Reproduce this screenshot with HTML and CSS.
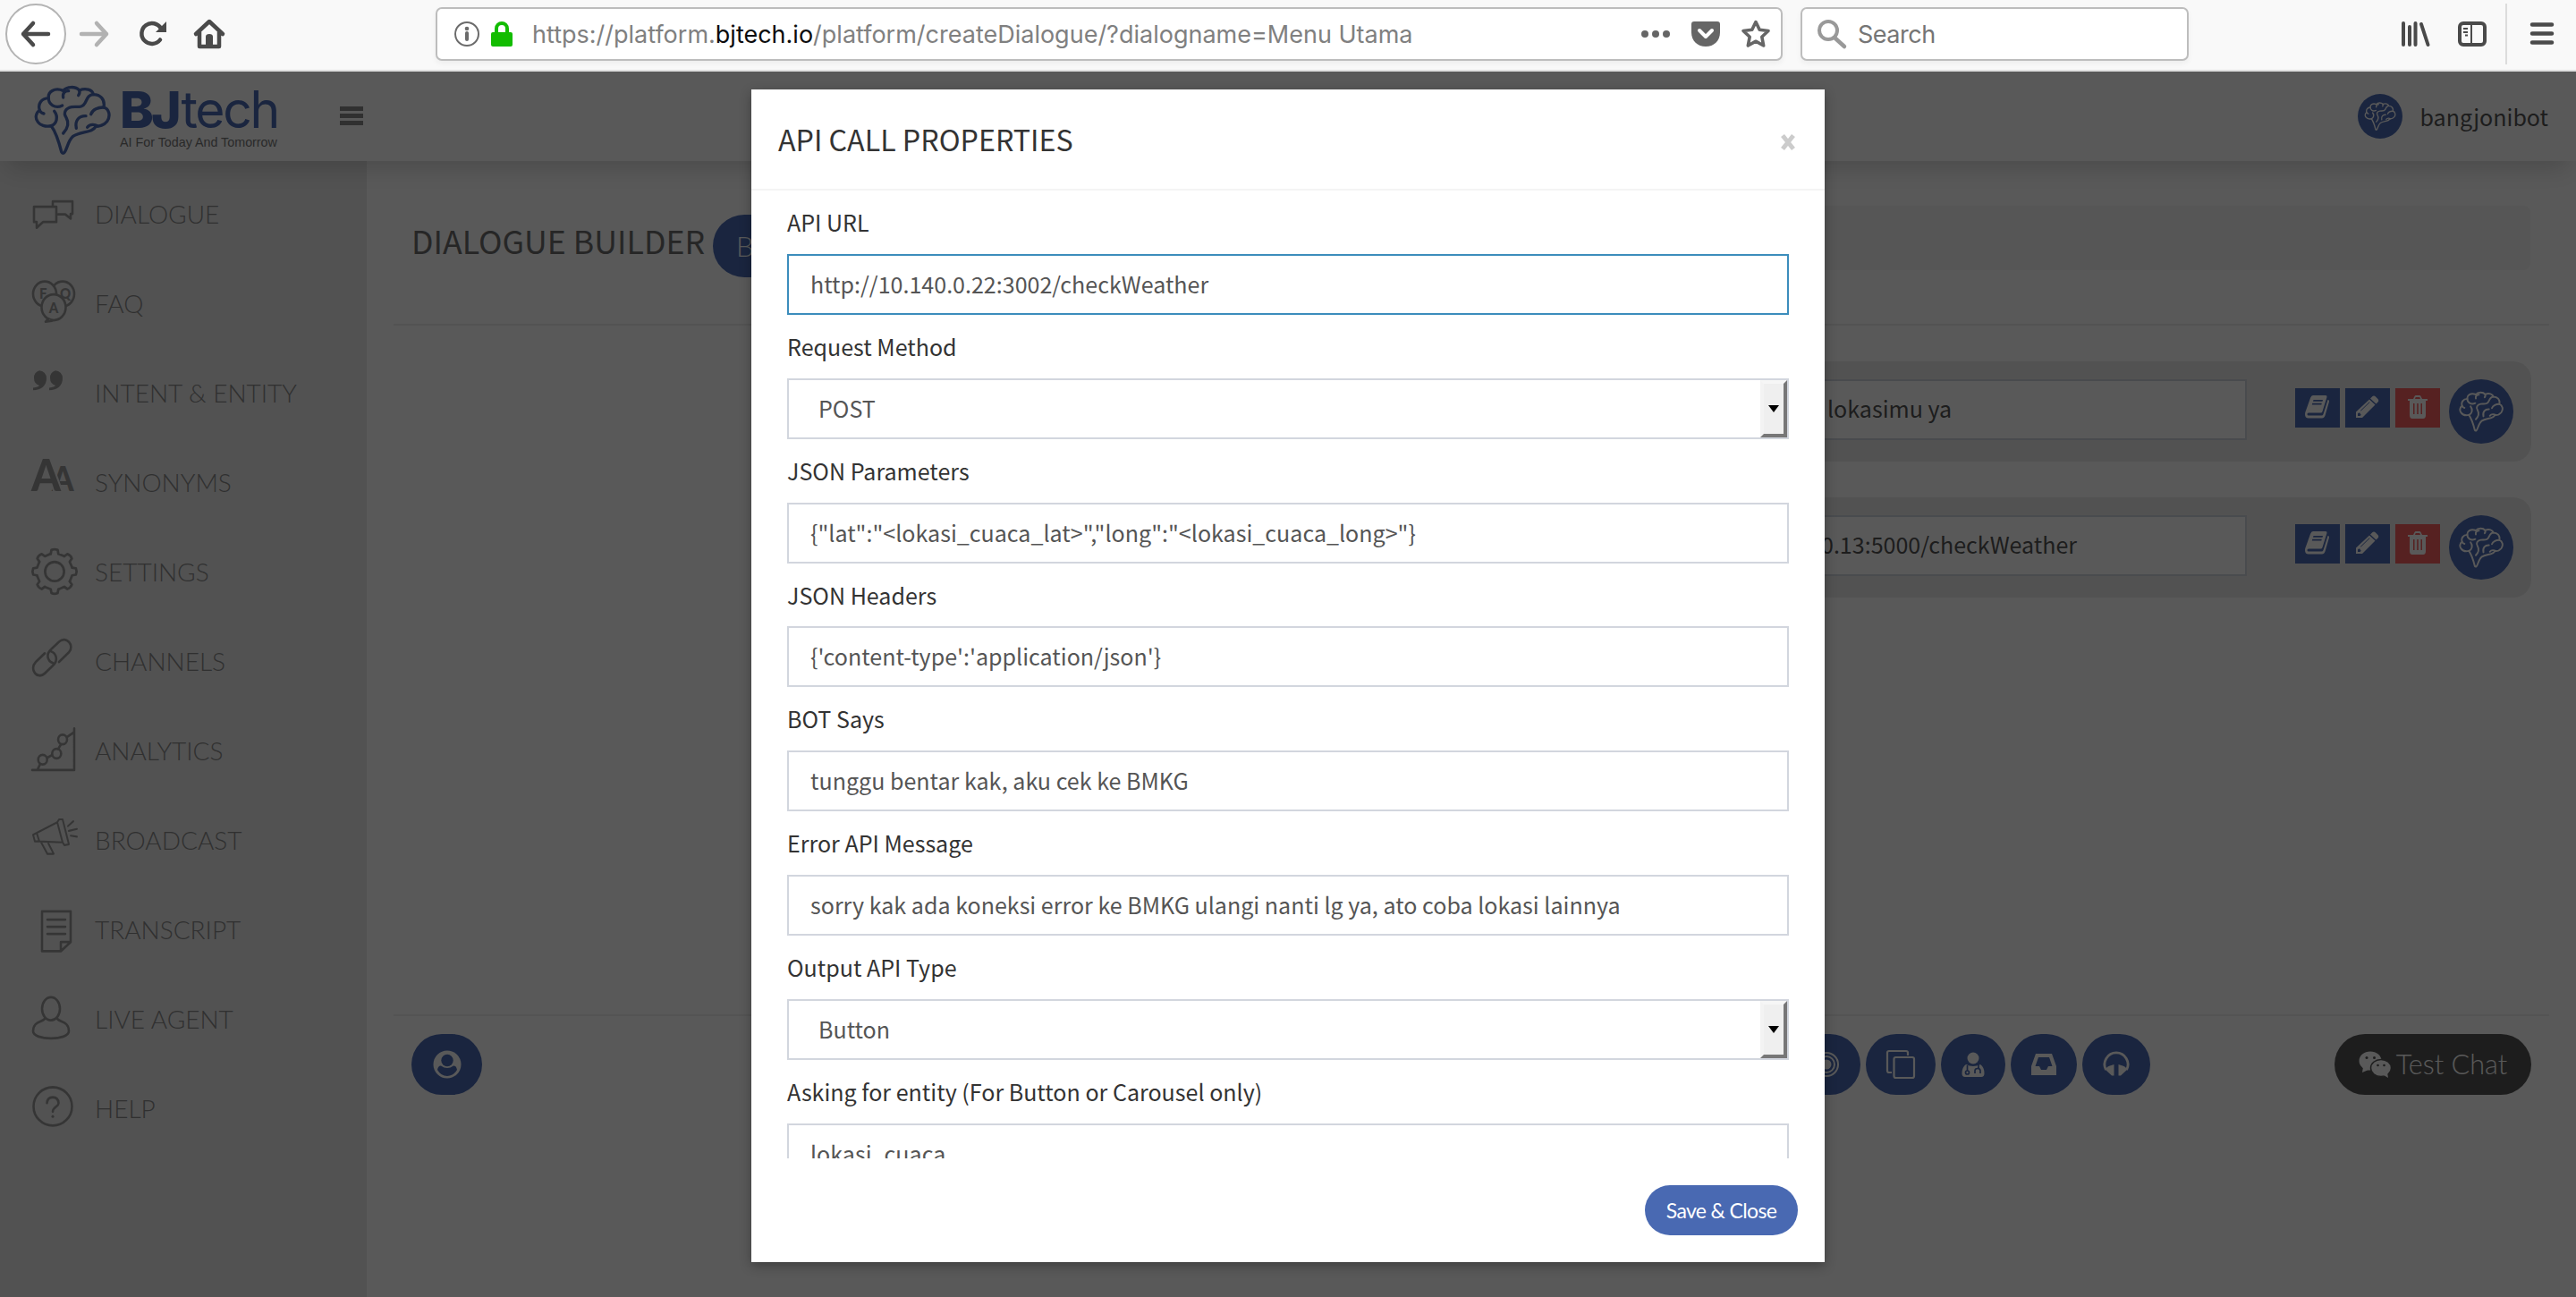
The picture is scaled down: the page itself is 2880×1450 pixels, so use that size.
FILE: index.html
```html
<!DOCTYPE html>
<html lang="id">
<head>
<meta charset="utf-8">
<title>Dialogue Builder</title>
<link rel="stylesheet" href="styles.css">
</head>
<body>
<svg class="defs" width="0" height="0" aria-hidden="true">
  <symbol id="brain" viewBox="24 18 258 234">
    <g fill="none" stroke="currentColor" stroke-width="10" stroke-linecap="round" stroke-linejoin="round">
      <path d="M82 155C62 160 44 152 37 142C26 128 31 110 43 103C36 82 48 63 73 62C70 42 92 25 122 37C134 22 164 22 176 36C198 27 220 34 223 50C246 50 263 66 258 93C276 98 282 122 269 140C259 153 242 157 232 156C220 180 182 172 155 190C137 204 134 240 124 246Q119 248 116 242C108 210 100 180 82 155"/>
      <path d="M43 103Q47 112 57 114M92 106C106 124 101 148 82 155M73 62C72 82 94 99 119 87M122 60C119 46 128 37 140 38M176 36Q179 44 173 53M223 50C205 50 202 66 195 79C186 97 166 89 150 92C130 96 121 111 132 127C143 146 136 165 122 180M166 163C160 136 176 121 198 122M215 116C220 101 240 92 258 93M203 160C212 148 228 150 238 156"/>
    </g>
  </symbol>
  <symbol id="book" viewBox="0 0 28 26">
    <path fill="currentColor" fill-rule="evenodd" d="M9 0H23Q25 0 24.500 2L19.500 18Q19 19.500 17.500 19.500H4Q2.500 19.500 2.500 21T4 22.500H18.500Q20 22.500 20.500 21L25.500 5Q27.500 5 27 7L22.500 22.500Q21.500 25.500 19 25.500H4Q0 25.500 0 21Q0 19 1 17L6 3Q7 0 9 0ZM9.500 5L9 6.800H19.500L20 5ZM8.300 8.800L7.800 10.600H18.300L18.800 8.800Z"/>
  </symbol>
  <symbol id="pencil" viewBox="0 0 26 26">
    <path fill="currentColor" fill-rule="evenodd" d="M18 1.500Q20 -0.500 22 1.500L24.500 4Q26 6 24.500 7.500L22.500 9.500L16 3.500ZM15 4.500L21.500 10.500L7 25H0V18.500ZM3 19.500L2 20.500V23H4.500L6 21.500L4.800 21.200V19.800ZM5.500 17.500L15.500 7.800L15 7.200L5 17Z"/>
  </symbol>
  <symbol id="trash" viewBox="0 0 22 26">
    <path fill="currentColor" fill-rule="evenodd" d="M0 4H6L7.500 1Q8 0 9 0H13Q14 0 14.500 1L16 4H22V6H20V22Q20 26 17 26H5Q2 26 2 22V6H0ZM8 4H14L13.300 2H8.700ZM6 9V21H7.500V9ZM10.200 9V21H11.800V9ZM14.500 9V21H16V9Z"/>
  </symbol>
</svg>

<div class="toolbar">
  <div class="nav">
    <span class="back"><svg width="34" height="30" viewBox="0 0 34 30"><path d="M31 15H3M14 3L3 15L14 27" class="ln"/></svg></span>
    <svg class="fwd" width="34" height="30" viewBox="0 0 34 30"><path d="M2 15H30M19 3L30 15L19 27" class="ln"/></svg>
    <svg class="reload" width="32" height="30" viewBox="0 0 32 30"><path d="M23 21.500A11.500 11.500 0 1 1 24 9" class="ln"/><path d="M30 1V13H18Z" fill="currentColor"/></svg>
    <svg class="home" width="34" height="34" viewBox="0 0 34 34"><path d="M2 17L17 3L32 17M6 15V31H28V15" class="ln"/><path d="M13 29V20Q13 17 17 17T21 20V29Z" fill="currentColor"/></svg>
  </div>
  <div class="urlbar">
    <svg width="30" height="30" viewBox="0 0 30 30"><circle cx="15" cy="15" r="13" fill="none" stroke="#6b6b6b" stroke-width="2"/><circle cx="15" cy="9" r="2.300" fill="#6b6b6b"/><path d="M15 14V21" stroke="#6b6b6b" stroke-width="4" stroke-linecap="round"/></svg>
    <svg class="lock" width="24" height="28" viewBox="0 0 24 28"><path d="M6 13V8A6 6 0 0 1 18 8V13" fill="none" stroke="#12bc00" stroke-width="4"/><rect y="12" width="24" height="16" rx="2" fill="#12bc00"/></svg>
    <span class="url">https://platform.<b>bjtech.io</b>/platform/createDialogue/?dialogname=Menu Utama</span>
    <span class="urlicons">
      <svg width="32" height="30" viewBox="0 0 32 30"><g fill="currentColor"><circle cx="4" cy="15" r="4"/><circle cx="16" cy="15" r="4"/><circle cx="28" cy="15" r="4"/></g></svg>
      <svg width="32" height="28" viewBox="0 0 32 28"><path d="M3 0H29Q32 0 32 3V12C32 22 25 28 16 28S0 22 0 12V3Q0 0 3 0Z" fill="currentColor"/><path d="M9 10L16 17L23 10" fill="none" stroke="#fff" stroke-width="4" stroke-linecap="round" stroke-linejoin="round"/></svg>
      <svg width="32" height="32" viewBox="0 0 32 32"><path d="M16 2.500L20.200 11.300L30 12.500L22.800 19.200L24.700 29L16 24.200L7.300 29L9.200 19.200L2 12.500L11.800 11.300Z" fill="none" stroke="currentColor" stroke-width="3.600" stroke-linejoin="round"/></svg>
    </span>
  </div>
  <div class="search">
    <svg width="34" height="34" viewBox="0 0 34 34"><circle cx="13" cy="13" r="10" fill="none" stroke="#999" stroke-width="4"/><path d="M20 21L31 31" stroke="#999" stroke-width="4.500" stroke-linecap="round"/></svg>
    <span>Search</span>
  </div>
  <div class="tools">
    <svg width="32" height="28" viewBox="0 0 32 28"><path d="M2 2V26M9 6V26M15.500 2V26M22 3L29.500 26" fill="none" stroke="currentColor" stroke-width="4" stroke-linecap="round"/></svg>
    <svg width="32" height="28" viewBox="0 0 32 28"><rect x="2" y="2" width="28" height="24" rx="4" fill="none" stroke="currentColor" stroke-width="4"/><path d="M15 3V25M6 8H11M6 12H11M8 15.500H11" stroke="currentColor" stroke-width="2" fill="none"/></svg>
  </div>
  <div class="burger"><svg width="26" height="26" viewBox="0 0 26 26"><path d="M2 2.500H24M2 12.500H24M2 22.500H24" class="ln"/></svg></div>
</div>

<div class="page">
  <header class="header">
    <div class="logo">
      <svg class="logobrain" width="86" height="78"><use href="#brain"/></svg>
      <div class="logotext"><div class="brand"><b>BJ</b><span>tech</span></div><div class="tag">AI For Today And Tomorrow</div></div>
    </div>
    <svg class="menubtn" width="26" height="22" viewBox="0 0 26 22"><path d="M0 0H26V5H0ZM0 8H26V13H0ZM0 16H26V21H0Z" fill="#8a8a8a"/></svg>
    <div class="user"><span class="avatar"><svg width="36" height="32"><use href="#brain"/></svg></span><span>bangjonibot</span></div>
  </header>
  <div class="main">
    <nav class="sidebar">
      <div class="item"><svg viewBox="0 0.67 50 93.33" preserveAspectRatio="none"><path d="M2 39H27V55H12L5 61V55H2Z"/><path d="M23 38V33.500H45V46.500H43V51.500L37 47H29"/></svg><span>DIALOGUE</span></div>
      <div class="item"><svg viewBox="0 -6 50 93.33" preserveAspectRatio="none"><circle cx="34" cy="30" r="13"/><circle cx="14" cy="30" r="13" class="bg"/><circle cx="24" cy="44" r="13.500" class="bg"/><path d="M18 56L15 59L22 58" class="bg"/><text x="8" y="35" class="f">F</text><text x="31" y="35" class="f">Q</text><text x="24" y="50" class="f" text-anchor="middle">A</text></svg><span>FAQ</span></div>
      <div class="item"><svg viewBox="0 -12.67 50 93.33" preserveAspectRatio="none"><path class="solid" d="M8 10A8 8 0 0 1 16 18C16 26 10 30.500 1 30.500V28Q7 27 8 25.500A8 8 0 0 1 8 10ZM26 10A8 8 0 0 1 34 18C34 26 28 30.500 19 30.500V28Q25 27 26 25.500A8 8 0 0 1 26 10Z"/></svg><span>INTENT &amp; ENTITY</span></div>
      <div class="item"><svg viewBox="0 -19.33 50 93.33" preserveAspectRatio="none"><text x="22" y="36" class="a2">A</text><text x="-1" y="36" class="a1">A</text></svg><span>SYNONYMS</span></div>
      <div class="item"><svg viewBox="0 -26 50 93.33" preserveAspectRatio="none"><g transform="translate(25 19.700) scale(1.060 1)"><circle r="10"/><path id="t" d="M-4 -18.500L-3.300 -22.500Q0 -24 3.300 -22.500L4 -18.500L10.100 -16.100"/><use href="#t" transform="rotate(45)"/><use href="#t" transform="rotate(90)"/><use href="#t" transform="rotate(135)"/><use href="#t" transform="rotate(180)"/><use href="#t" transform="rotate(225)"/><use href="#t" transform="rotate(270)"/><use href="#t" transform="rotate(315)"/></g></svg><span>SETTINGS</span></div>
      <div class="item"><svg viewBox="0 -32.67 50 93.33" preserveAspectRatio="none"><path d="M14 5L4 14C-4 22 6 33 14 26L24 17C29 12 27 5 21 3M30 14L41 4C48 -3 38 -14 30 -7L21 1C15 6 17 13 23 15"/></svg><span>CHANNELS</span></div>
      <div class="item"><svg viewBox="0 -4.65 50 93.33" preserveAspectRatio="none"><path d="M0 61.500H47V18M6 61L9 55M17 48.500L22 46M29 39.500L32 35M39 27L47 22"/><circle cx="11.700" cy="50.700" r="5"/><circle cx="27.300" cy="44.300" r="5"/><circle cx="34" cy="29.700" r="5"/></svg><span>ANALYTICS</span></div>
      <div class="item"><svg viewBox="0 -11.3 50 93.33" preserveAspectRatio="none"><path class="thin" d="M1 29L28 16L30 13H34L41 39L36 40L34 37L7 36L3 36ZM28 16L34 37M5 27L8 36M10 37L17 49H24L18 38M40 20L46 15M41 25L50 23M43 30L50 31"/></svg><span>BROADCAST</span></div>
      <div class="item"><svg viewBox="0 -18 50 93.33" preserveAspectRatio="none"><path d="M11 9H43V41L32 50.500H11ZM32 50V41H43M17 17.500H37M17 25H37M17 32.500H37"/></svg><span>TRANSCRIPT</span></div>
      <div class="item"><svg viewBox="0 -24.67 50 93.33" preserveAspectRatio="none"><ellipse cx="21" cy="10.500" rx="10" ry="12"/><path d="M14 21C10 25 1 24 1 34C1 44 41 44 41 34C41 24 32 25 28 21"/></svg><span>LIVE AGENT</span></div>
      <div class="item"><svg viewBox="0 -31.3 50 93.33" preserveAspectRatio="none"><ellipse cx="23" cy="12.500" rx="21.500" ry="20"/><path d="M16.500 9Q17 3 23 3T29.500 9C29.500 13 23 13 23 18"/><circle cx="23" cy="23" r="1.500" class="solid"/></svg><span>HELP</span></div>
    </nav>
    <main class="content">
      <div class="titlebar"><h1>DIALOGUE BUILDER</h1><span class="pill">B</span><div class="crumb"></div></div>
      <div class="rule"></div>
      <div class="rows">
        <div class="row"><div class="field"><span>lokasimu ya</span></div><div class="acts"><i><svg width="28" height="26"><use href="#book"/></svg></i><i><svg width="26" height="26"><use href="#pencil"/></svg></i><i class="red"><svg width="22" height="26"><use href="#trash"/></svg></i></div><span class="bot"><svg width="50" height="46"><use href="#brain"/></svg></span></div>
        <div class="row"><div class="field"><span>0.13:5000/checkWeather</span></div><div class="acts"><i><svg width="28" height="26"><use href="#book"/></svg></i><i><svg width="26" height="26"><use href="#pencil"/></svg></i><i class="red"><svg width="22" height="26"><use href="#trash"/></svg></i></div><span class="bot"><svg width="50" height="46"><use href="#brain"/></svg></span></div>
      </div>
      <div class="rule"></div>
      <div class="footbar">
        <span class="fb w79"><svg width="32" height="32" viewBox="0 0 32 32"><circle cx="16" cy="16" r="15.500" fill="#fff"/><circle cx="16" cy="11.500" r="6.700" fill="#4a6ab4"/><path d="M5 22Q6 17 9 17.500Q16 22.500 23 17.500Q26 17 27 22Q23 29 16 29T5 22Z" fill="#4a6ab4"/></svg></span>
        <div class="group">
          <span class="fb w76"><svg width="30" height="30" viewBox="0 0 30 30"><g fill="none" stroke="#fff" stroke-width="2"><circle cx="15" cy="15" r="13"/><circle cx="15" cy="15" r="9"/></g><circle cx="15" cy="15" r="5.500" fill="#fff"/></svg></span>
          <span class="fb w78"><svg width="32" height="32" viewBox="0 0 32 32"><g fill="none" stroke="#fff" stroke-width="2.200"><rect x="8.500" y="8" width="22.500" height="23" rx="2"/><path d="M6 25H3Q1 25 1 23V3Q1 1 3 1H22Q24 1 24 3V6"/></g></svg></span>
          <span class="fb w72"><svg width="26" height="28" viewBox="0 0 26 28"><g fill="#fff"><circle cx="13" cy="7" r="6.500"/><path d="M5 14Q13 18 21 14Q25.500 17 25.500 24Q25.500 28 22 28H4Q.5 28 .5 24Q.5 17 5 14Z"/></g><g fill="none" stroke="#4a6ab4" stroke-width="1.700"><path d="M6.500 15V21M15 24V21Q15 18.500 18 18.500T21 21V24M19 14V18"/><circle cx="6.500" cy="23" r="2"/></g></svg></span>
          <span class="fb w74"><svg width="28" height="24" viewBox="0 0 28 24"><path fill="#fff" fill-rule="evenodd" d="M5 0H23L28 14V24H0V14ZM8 4L4.500 14H9L11 18H17L19 14H23.500L20 4Z"/></svg></span>
          <span class="fb w76"><svg width="30" height="26" viewBox="0 0 30 26"><path d="M3.500 19A13 13 0 1 1 26.500 19" fill="none" stroke="#fff" stroke-width="2.800"/><path d="M9.500 14L12.500 13V25.500H10L3 19Q4 15 9.500 14ZM20.500 14L17.500 13V25.500H20L27 19Q26 15 20.500 14Z" fill="#fff"/></svg></span>
        </div>
        <span class="test"><svg width="36" height="30" viewBox="0 0 36 30"><g fill="#fff"><ellipse cx="13" cy="11" rx="12.500" ry="10.500"/><path d="M5 18L4 24L11 21Z"/><ellipse cx="25" cy="19" rx="11.500" ry="9.500" stroke="#555" stroke-width="1.500"/><path d="M28 27L33 30L32 24Z"/></g><g fill="#555"><circle cx="9" cy="7.500" r="1.500"/><circle cx="17.500" cy="7.500" r="1.500"/><circle cx="21.500" cy="16" r="1.300"/><circle cx="28.500" cy="16" r="1.300"/></g></svg><span>Test Chat</span></span>
      </div>
    </main>
  </div>

  <div class="overlay">
    <section class="modal">
      <div class="mhead"><h2>API CALL PROPERTIES</h2><svg class="close" width="18" height="18" viewBox="0 0 18 18"><path d="M3 1.500L15 16.500M15 1.500L3 16.500" stroke="#ccc" stroke-width="5"/></svg></div>
      <div class="mbody">
        <label>API URL</label><div class="inp focus"><span>http://10.140.0.22:3002/checkWeather</span></div>
        <label>Request Method</label><div class="inp sel"><span>POST</span><i></i></div>
        <label>JSON Parameters</label><div class="inp"><span>{"lat":"&lt;lokasi_cuaca_lat&gt;","long":"&lt;lokasi_cuaca_long&gt;"}</span></div>
        <label>JSON Headers</label><div class="inp"><span>{'content-type':'application/json'}</span></div>
        <label>BOT Says</label><div class="inp"><span>tunggu bentar kak, aku cek ke BMKG</span></div>
        <label>Error API Message</label><div class="inp"><span>sorry kak ada koneksi error ke BMKG ulangi nanti lg ya, ato coba lokasi lainnya</span></div>
        <label>Output API Type</label><div class="inp sel"><span>Button</span><i></i></div>
        <label>Asking for entity (For Button or Carousel only)</label><div class="inp"><span>lokasi_cuaca</span></div>
      </div>
      <div class="mfoot"><span class="save">Save &amp; Close</span></div>
    </section>
  </div>
</div>
</body>
</html>
```
FILE: styles.css
```css
* { box-sizing: border-box; }
body { margin: 0; width: 2880px; height: 1450px; overflow: hidden; background: #fff; font-family: "Noto Sans CJK SC", "Noto Sans", sans-serif; font-size: 25.05px; color: #333; }
svg { display: block; flex: none; overflow: visible; }
.defs { position: absolute; }
.ln { fill: none; stroke: currentColor; stroke-width: 4.5; stroke-linecap: round; stroke-linejoin: round; }

/* browser toolbar */
.toolbar { height: 80px; display: flex; align-items: flex-start; background: #f9f9f9; border-bottom: 2px solid #e1e1e1; color: #4a4a4a; font-family: Inter, sans-serif; }
.nav { width: 487px; height: 76px; padding-left: 6px; display: flex; align-items: center; }
.back { width: 68px; height: 68px; border: 2px solid #b4b4b4; border-radius: 50%; background: #fff; display: flex; align-items: center; justify-content: center; }
.fwd { margin-left: 15px; color: #b2b2b2; }
.reload { margin-left: 33px; }
.home { margin-left: 29px; }
.urlbar, .search { height: 60px; margin-top: 8px; border: 2px solid #bdbdbd; border-radius: 7px; background: #fff; box-shadow: 0 3px 6px rgba(0,0,0,.05); display: flex; align-items: center; }
.urlbar { width: 1506px; padding: 0 12px 0 18px; }
.lock { margin-left: 12px; }
.url { margin-left: 22px; font-size: 27px; color: #808080; white-space: nowrap; }
.url b { font-weight: 400; color: #0c0c0d; }
.urlicons { margin-left: auto; display: flex; align-items: center; gap: 24px; color: #666; }
.search { width: 434px; margin-left: 20px; padding-left: 16px; font-size: 27px; letter-spacing: -.5px; color: #757575; gap: 12px; }
.tools { margin-left: 238px; height: 76px; display: flex; align-items: center; gap: 31px; }
.burger { margin-left: 21px; margin-top: 4px; height: 68px; padding-left: 26px; border-left: 2px solid #dcdcdc; display: flex; align-items: center; }

/* application */
.page { position: relative; height: 1370px; }
.header { position: relative; height: 100px; background: #fff; display: flex; align-items: center; box-shadow: 0 16px 26px -8px rgba(0,0,0,.17); }
.logo { width: 311px; padding-left: 38px; display: flex; gap: 10px; color: #4a6ab4; }
.logobrain { margin-top: 8px; }
.logotext { height: 84px; white-space: nowrap; font-family: Inter, sans-serif; }
.brand { height: 58px; line-height: 72px; font-size: 57px; display: flex; gap: 3px; }
.brand b { font-weight: 800; letter-spacing: -3px; }
.brand span { letter-spacing: -2.3px; }
.tag { font: 14.3px/28px "Liberation Sans", sans-serif; color: #777; }
.menubtn { margin-left: 69px; }
.user { margin-left: auto; padding-right: 31px; display: flex; align-items: center; gap: 20px; color: #555; }
.avatar { width: 50px; height: 50px; border-radius: 50%; background: #4a6ab4; color: #fff; display: flex; align-items: center; justify-content: center; }
.main { display: flex; height: 1270px; }
.sidebar { width: 410px; padding: 10px 0 0 36px; background: #ebebeb; font-family: Lato, sans-serif; font-weight: 300; font-size: 28px; color: #8a8a8a; }
.item { height: 100px; display: flex; align-items: center; gap: 20px; }
.item span { margin-top: -2px; }
.item svg { width: 50px; height: 100px; fill: none; stroke: #999; stroke-width: 2.6; stroke-linejoin: round; stroke-linecap: round; }
.item .bg { fill: #ebebeb; }
.item .thin { stroke-width: 2; }
.item .solid { fill: #999; stroke: none; }
.item .f { font: 900 15px Lato, sans-serif; fill: #999; stroke: none; }
.item .a1, .item .a2 { font: 900 47px Lato, sans-serif; fill: #999; stroke: #ebebeb; stroke-width: 4; paint-order: stroke; }
.item .a2 { font-size: 35px; }
.content { flex: 1; padding: 0 30px; }
.titlebar { height: 182px; padding: 50px 21px 60px 20px; display: flex; align-items: center; }
.titlebar h1 { margin: 5px 0 0; width: 337px; font-weight: 400; font-size: 35.7px; color: #6e6e6e; white-space: nowrap; }
.pill { width: 120px; height: 70px; margin-top: 18px; padding-left: 26px; border-radius: 35px; background: #4a6ab4; color: #fff; font: 300 31px/70px Lato, sans-serif; }
.crumb { flex: 1; height: 72px; margin-left: 20px; border-radius: 8px; background: #f5f5f5; }
.rule { height: 2px; background: #eee; }
.rows { height: 770px; padding: 40px 20px 0; display: flex; flex-direction: column; align-items: flex-end; gap: 40px; }
.row { width: 1160px; height: 112px; flex: none; border-radius: 20px; background: #ebebeb; display: flex; justify-content: flex-end; padding: 20px; }
.field { width: 800px; height: 68px; border: 2px solid #d2d6de; background: #fff; color: #555; line-height: 61px; padding-left: 329px; white-space: nowrap; }
.row:last-child .field { padding-left: 322px; }
.acts { margin: 10px 10px 0 54px; display: flex; gap: 6px; color: #fff; }
.acts i { width: 50px; height: 44px; background: #4a6ab4; display: flex; justify-content: center; padding-top: 8px; }
.acts i.red { background: #f56060; }
.bot { width: 72px; height: 72px; border-radius: 50%; background: #4a6ab4; color: #fff; display: flex; align-items: center; justify-content: center; }
.footbar { padding: 20px 20px 0; display: flex; }
.fb, .test { height: 68px; border-radius: 34px; background: #4a6ab4; display: flex; align-items: center; justify-content: center; }
.w79 { width: 79px; }
.w76 { width: 76px; }
.w78 { width: 78px; }
.w72 { width: 72px; }
.w74 { width: 74px; }
.group { margin-left: auto; margin-right: 206px; display: flex; gap: 6px; }
.test { width: 220px; background: #555; color: #fff; gap: 6px; font: 300 30.6px/60px Lato, sans-serif; white-space: nowrap; }

/* modal */
.overlay { position: absolute; inset: 0; background: rgba(0,0,0,.65); padding-top: 20px; }
.modal { width: 1200px; height: 1311px; margin: 0 auto; background: #fff; box-shadow: 0 4px 12px rgba(0,0,0,.3); }
.mhead { height: 113px; padding: 0 32px 0 30px; border-bottom: 2px solid #f4f4f4; display: flex; align-items: center; justify-content: space-between; }
.mhead h2 { margin: -1px 0 0; font-weight: 400; font-size: 32.2px; }
.close { margin-top: 6px; }
.mbody { height: 1082px; overflow: hidden; padding: 0 40px; }
.mbody label { display: block; height: 70.857px; line-height: 70px; }
.inp { height: 68px; border: 2px solid #d2d6de; padding-left: 24px; line-height: 62px; color: #555; white-space: nowrap; }
.focus { border-color: #3c8dbc; }
.sel { display: flex; justify-content: space-between; padding-left: 33px; }
.sel i { width: 30px; height: 64px; background: #efefef; border: 4px solid; border-color: #f6f6f6 #777 #777 #f3f3f3; display: flex; align-items: center; justify-content: center; }
.sel i::after { content: ""; border: 6px solid transparent; border-top: 8px solid #000; border-bottom: 0; }
.mfoot { padding: 30px 30px 0; display: flex; justify-content: flex-end; }
.save { width: 171px; height: 56px; border-radius: 28px; background: #4969b2; color: #fff; text-align: center; font: 400 23px/56px Lato, sans-serif; letter-spacing: -.65px; }
```
